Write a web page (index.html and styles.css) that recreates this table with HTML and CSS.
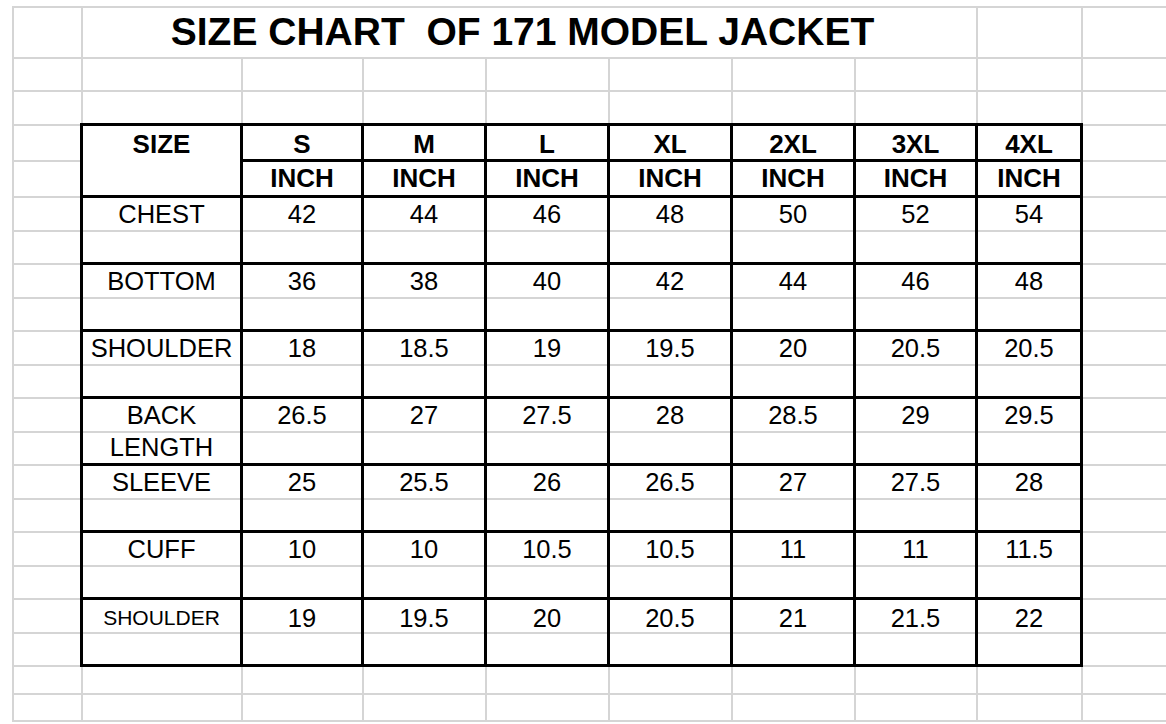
FILE: index.html
```html
<!DOCTYPE html>
<html lang="en">
<head>
<meta charset="utf-8">
<title>Size Chart of 171 Model Jacket</title>
<link rel="stylesheet" href="styles.css">
</head>
<body>
<div class="sheet">
  <div class="vlines">
    <div></div><div></div><div></div><div></div><div></div>
    <div></div><div></div><div></div><div></div><div></div>
  </div>
  <div class="title">SIZE CHART&nbsp; OF 171 MODEL JACKET</div>
  <div class="hlines">
    <div></div><div></div><div></div><div></div><div></div><div></div><div></div>
    <div></div><div></div><div></div><div></div><div></div><div></div><div></div>
    <div></div><div></div><div></div><div></div><div></div><div></div><div></div>
  </div>
  <div class="chart">
    <div class="cell head size">SIZE</div>
    <div class="cell head top">S</div>
    <div class="cell head top">M</div>
    <div class="cell head top">L</div>
    <div class="cell head top">XL</div>
    <div class="cell head top">2XL</div>
    <div class="cell head top">3XL</div>
    <div class="cell head top">4XL</div>
    <div class="cell head">INCH</div>
    <div class="cell head">INCH</div>
    <div class="cell head">INCH</div>
    <div class="cell head">INCH</div>
    <div class="cell head">INCH</div>
    <div class="cell head">INCH</div>
    <div class="cell head">INCH</div>

    <div class="cell">CHEST</div>
    <div class="cell">42</div><div class="cell">44</div><div class="cell">46</div><div class="cell">48</div><div class="cell">50</div><div class="cell">52</div><div class="cell">54</div>

    <div class="cell">BOTTOM</div>
    <div class="cell">36</div><div class="cell">38</div><div class="cell">40</div><div class="cell">42</div><div class="cell">44</div><div class="cell">46</div><div class="cell">48</div>

    <div class="cell">SHOULDER</div>
    <div class="cell">18</div><div class="cell">18.5</div><div class="cell">19</div><div class="cell">19.5</div><div class="cell">20</div><div class="cell">20.5</div><div class="cell">20.5</div>

    <div class="cell">BACK LENGTH</div>
    <div class="cell">26.5</div><div class="cell">27</div><div class="cell">27.5</div><div class="cell">28</div><div class="cell">28.5</div><div class="cell">29</div><div class="cell">29.5</div>

    <div class="cell">SLEEVE</div>
    <div class="cell">25</div><div class="cell">25.5</div><div class="cell">26</div><div class="cell">26.5</div><div class="cell">27</div><div class="cell">27.5</div><div class="cell">28</div>

    <div class="cell">CUFF</div>
    <div class="cell">10</div><div class="cell">10</div><div class="cell">10.5</div><div class="cell">10.5</div><div class="cell">11</div><div class="cell">11</div><div class="cell">11.5</div>

    <div class="cell last label-small">SHOULDER</div>
    <div class="cell last">19</div><div class="cell last">19.5</div><div class="cell last">20</div><div class="cell last">20.5</div><div class="cell last">21</div><div class="cell last">21.5</div><div class="cell last">22</div>
  </div>
</div>
</body>
</html>
```
FILE: styles.css
```css
:root {
  --cols: 69px 160px 121px 123px 123px 123px 123px 122px 105px 1fr;
  --rows: 51px 33px 34px 36px 36px repeat(14, 33.5px) 28px 27px;
  --grid-line: #d5d5d5;
}

* {
  box-sizing: border-box;
}

html,
body {
  margin: 0;
  padding: 0;
  background: #ffffff;
}

body {
  font-family: "Liberation Sans", Arial, sans-serif;
  color: #000000;
  overflow: hidden;
}

.sheet {
  display: grid;
  grid-template-columns: var(--cols);
  grid-template-rows: var(--rows);
  width: 1154px;
  margin: 6px 0 0 12px;
  border-bottom: 2px solid var(--grid-line);
}

.vlines {
  grid-area: 1 / 1 / -1 / -1;
  display: grid;
  grid-template-columns: var(--cols);
}

.vlines > div {
  border-left: 2px solid var(--grid-line);
}

.hlines {
  grid-area: 1 / 1 / -1 / -1;
  display: grid;
  grid-template-rows: var(--rows);
}

.hlines > div {
  border-top: 2px solid var(--grid-line);
}

.title {
  grid-area: 1 / 2 / 2 / 9;
  margin-left: 2px;
  padding-right: 14px;
  background: #ffffff;
  display: flex;
  align-items: center;
  justify-content: center;
  font-size: 39px;
  font-weight: bold;
  white-space: nowrap;
  letter-spacing: 0;
}

.chart {
  grid-area: 4 / 2 / 20 / 10;
  align-self: start;
  justify-self: start;
  margin: -1px 0 0 -1px;
  width: 1003px;
  height: 544px;
  display: grid;
  grid-template-columns: 160px 121px 123px 123px 123px 123px 122px 105px;
  grid-template-rows: 36px 36px repeat(7, 67px);
  border-top: 3px solid #000000;
  border-left: 3px solid #000000;
}

.cell {
  border-right: 3px solid #000000;
  border-bottom: 3px solid #000000;
  text-align: center;
  font-size: 25.5px;
  line-height: 32px;
  padding: 0 2px;
}

.head {
  font-weight: bold;
  font-size: 26px;
  line-height: 33px;
  padding-top: 0;
}

.head.top,
.head.size {
  padding-top: 2px;
}

.size {
  grid-row: span 2;
  background: #ffffff;
}

.last {
  padding-top: 2px;
}

.label-small {
  font-size: 21px;
}
```
